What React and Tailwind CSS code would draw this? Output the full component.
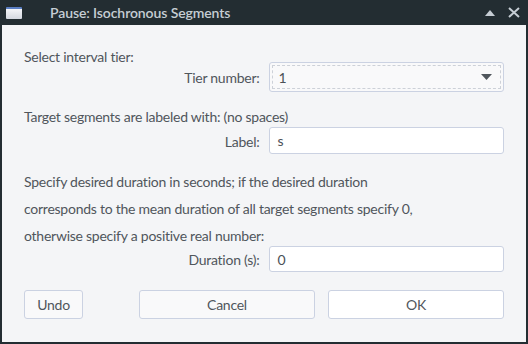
import React from 'react';

const font = { fontFamily: 'Lato, "Liberation Sans", sans-serif' };

function TextInput({ value, h }) {
    return (
        <div className={`${h} bg-white border border-[#cbd2e2] rounded-[3px] flex items-center pl-[8px] text-[14px] text-[#4b5157]`}>
            {value}
        </div>
    );
}

export default function App() {
    return (
        <div className="w-[528px] h-[344px] bg-[#232d32] flex flex-col text-[#50565c] tracking-[-0.25px]" style={font}>
            {/* title bar */}
            <div className="h-[25px] flex items-center relative shrink-0">
                <div className="ml-[6px] w-[16px] h-[12px] rounded-[1px] bg-gradient-to-b from-[#f4f5f8] to-[#d4d8e0] border-t-2 border-[#5b7fc4]" />
                <div className="ml-[28px] text-[14px] font-semibold text-[#c6cdd4] tracking-[-0.1px]">Pause: Isochronous Segments</div>
                <div className="flex-1" />
                <svg width="10" height="6" viewBox="0 0 10 6" className="mr-[13px] mt-[1px]">
                    <path d="M0 6 L5 0 L10 6 Z" fill="#c6cdd4" />
                </svg>
                <svg width="12" height="11" viewBox="0 0 12 11" className="mr-[8px]">
                    <path d="M1 1 L11 10 M11 1 L1 10" stroke="#c6cdd4" strokeWidth="2" />
                </svg>
            </div>

            {/* body */}
            <div className="flex-1 mx-[2px] mb-[2px] bg-[#f4f5f7] px-[22px] pt-[24px] flex flex-col text-[14px]">
                <div className="leading-[16px]">Select interval tier:</div>
                <div className="grid grid-cols-2 gap-x-[9px] -mt-[3px]">
                    <div className="flex items-center justify-end pt-[1px]">Tier number:</div>
                    <div className="h-[30px] bg-[#f9f9fa] border border-[#cbd2e2] rounded-[3px] p-[2px]">
                        <div className="h-full border border-dashed border-[#cdd1d8] flex items-center pl-[6px] pr-[8px] text-[#4b5157]">
                            <span>1</span>
                            <div className="flex-1" />
                            <svg width="11" height="6" viewBox="0 0 11 6">
                                <path d="M0 0 L11 0 L5.5 6 Z" fill="#50565c" />
                            </svg>
                        </div>
                    </div>
                </div>

                <div className="leading-[16px] mt-[17px]">Target segments are labeled with: (no spaces)</div>
                <div className="grid grid-cols-2 gap-x-[9px] mt-[2px]">
                    <div className="flex items-center justify-end pt-[1px]">Label:</div>
                    <TextInput value="s" h="h-[27px]" />
                </div>

                <div className="leading-[27px] mt-[14px]">
                    <div>Specify desired duration in seconds; if the desired duration</div>
                    <div>corresponds to the mean duration of all target segments specify 0,</div>
                    <div>otherwise specify a positive real number:</div>
                </div>
                <div className="grid grid-cols-2 gap-x-[9px] -mt-[3px]">
                    <div className="flex items-center justify-end">Duration (s):</div>
                    <TextInput value="0" h="h-[26px]" />
                </div>

                <div className="flex mt-[18px] h-[29px]">
                    <button className="w-[59px] bg-[#f9f9fa] border border-[#cbd2e2] rounded-[3px] text-[#50565c]">Undo</button>
                    <div className="flex-1" />
                    <button className="w-[176px] bg-[#f9f9fa] border border-[#cbd2e2] rounded-[3px] text-[#50565c]">Cancel</button>
                    <button className="w-[176px] ml-[13px] bg-white border border-[#cbd2e2] rounded-[3px] text-[#50565c]">OK</button>
                </div>
            </div>
        </div>
    );
}
